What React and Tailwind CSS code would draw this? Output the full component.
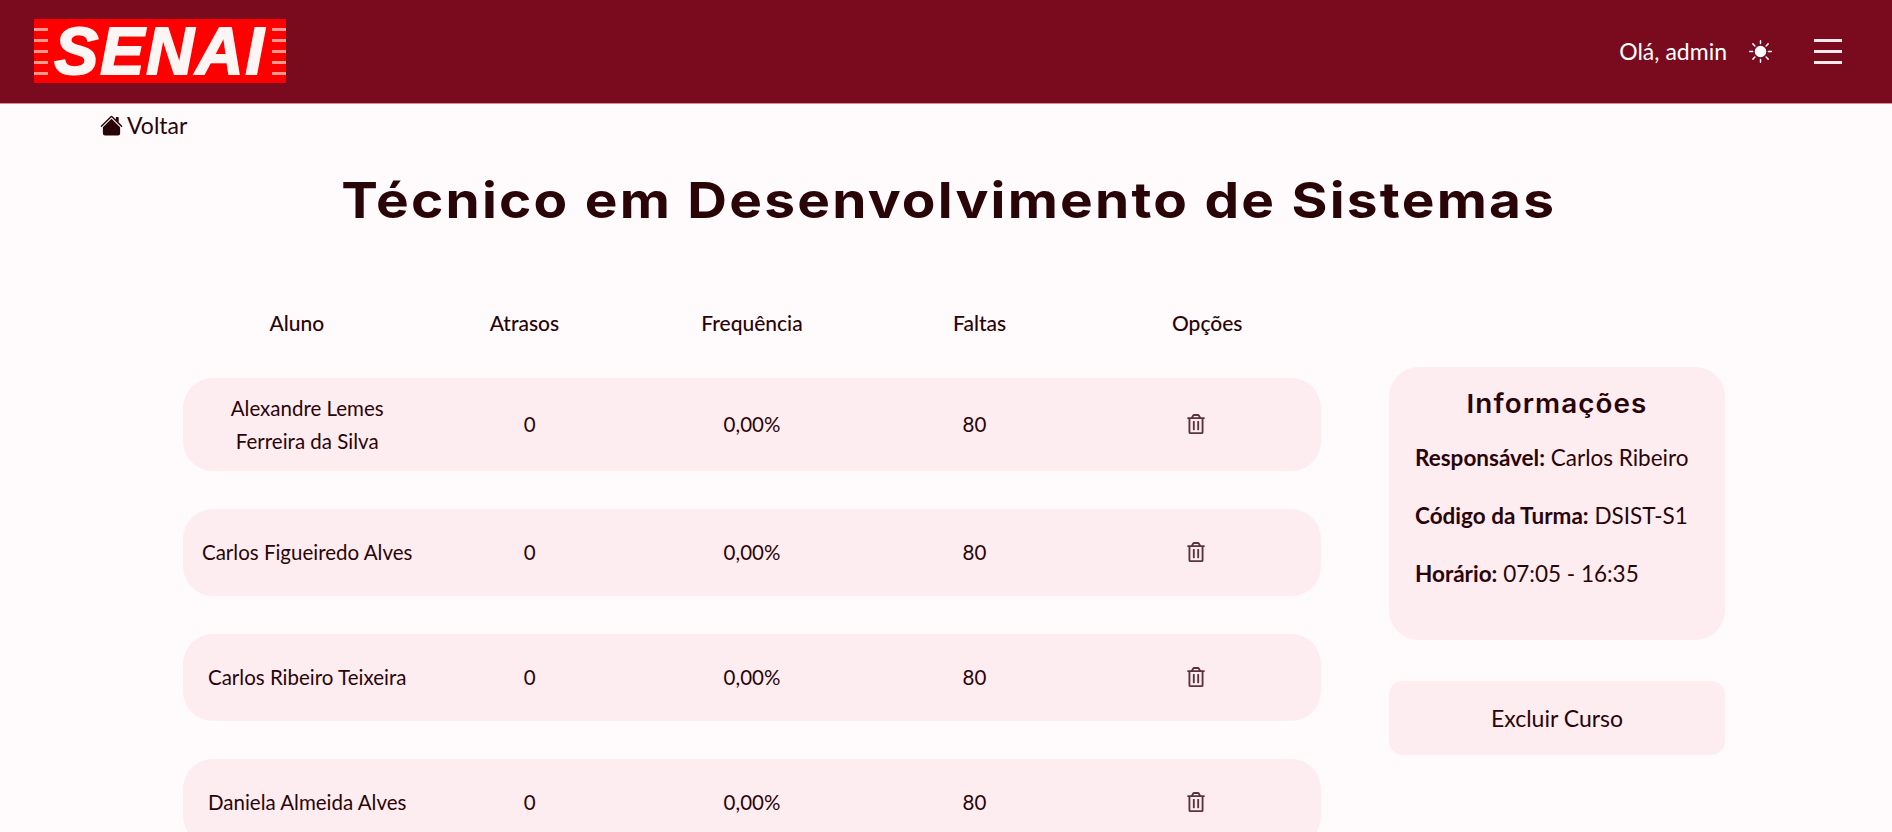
import React from 'react'
import { BsHouseFill, BsSunFill } from 'react-icons/bs'
import { FaRegTrashAlt } from 'react-icons/fa'

const alunos = [
  { nome: 'Alexandre Lemes Ferreira da Silva', altura: 'h-[93px]' },
  { nome: 'Carlos Figueiredo Alves', altura: 'h-[87px]' },
  { nome: 'Carlos Ribeiro Teixeira', altura: 'h-[87px]' },
  { nome: 'Daniela Almeida Alves', altura: 'h-[87px]' },
]

const colunas = ['Aluno', 'Atrasos', 'Frequência', 'Faltas', 'Opções']

function Stripes() {
  return (
    <div className="flex w-[14px] flex-col gap-[8px]">
      {[0, 1, 2, 3, 4].map((i) => (
        <div key={i} className="h-[3px] bg-[#ff9a8f]" />
      ))}
    </div>
  )
}

function Logo() {
  return (
    <div className="flex h-[64px] w-[252px] items-center justify-between bg-[#ff0000]">
      <Stripes />
      <span className="text-[66px] leading-none font-bold italic tracking-[2px] text-[#fbf6f4] [-webkit-text-stroke:2px_#fbf6f4] [font-family:'Liberation_Sans',sans-serif]">
        SENAI
      </span>
      <Stripes />
    </div>
  )
}

function Header() {
  return (
    <header className="flex h-[104px] items-center justify-between border-b border-[#d98a9c] bg-[#7a0b1e] pr-[50px] pb-[1px] pl-[34px]">
      <Logo />
      <div className="flex items-center text-white">
        <span className="text-[23px] leading-[28px]">Olá, admin</span>
        <BsSunFill size={23} className="mr-[42px] ml-[22px]" />
        <div className="flex w-[28px] flex-col gap-[8px]">
          <div className="h-[3px] bg-[#fde8ec]" />
          <div className="h-[3px] bg-[#fde8ec]" />
          <div className="h-[3px] bg-[#fde8ec]" />
        </div>
      </div>
    </header>
  )
}

function Linha({ aluno }) {
  return (
    <div className={`grid grid-cols-5 items-center rounded-[30px] bg-[#feedf0] px-[13px] text-center text-[20.5px] ${aluno.altura}`}>
      <span className="leading-[33px]">{aluno.nome}</span>
      <span>0</span>
      <span>0,00%</span>
      <span>80</span>
      <FaRegTrashAlt size={20} className="mx-auto -translate-x-px -translate-y-px text-[#5b343b]" />
    </div>
  )
}

export default function App() {
  return (
    <div className="h-screen overflow-hidden bg-[#fffafc] text-[#2a0508] [font-family:Lato,sans-serif]">
      <Header />
      <a className="mt-[8px] ml-[100px] flex items-center gap-[4px] text-[23px] leading-[26px]">
        <BsHouseFill size={23} />
        Voltar
      </a>
      <h1 className="mt-[32px] scale-x-[1.1] pl-[5px] text-center text-[50px] leading-[60px] font-bold tracking-[2px] [font-family:Inter,sans-serif]">
        Técnico em Desenvolvimento de Sistemas
      </h1>
      <div className="mt-[79px] ml-[183px] flex items-start gap-[68px]">
        <div className="w-[1138px]">
          <div className="grid grid-cols-5 text-center text-[21px] leading-[27px] font-medium">
            {colunas.map((c) => (
              <span key={c}>{c}</span>
            ))}
          </div>
          <div className="mt-[42px] flex flex-col gap-[38px]">
            {alunos.map((a) => (
              <Linha key={a.nome} aluno={a} />
            ))}
          </div>
        </div>
        <div className="mt-[58px] flex w-[336px] flex-col gap-[41px]">
          <div className="h-[273px] rounded-[30px] bg-[#feedf0] px-[26px] pt-[19px] text-[22.5px] leading-[30px]">
            <h2 className="mb-[21px] scale-x-[1.07] text-center text-[26px] leading-[36px] font-semibold tracking-[1px] [font-family:Inter,sans-serif]">Informações</h2>
            <p className="mb-[28px]"><b>Responsável:</b> Carlos Ribeiro</p>
            <p className="mb-[28px]"><b>Código da Turma:</b> DSIST-S1</p>
            <p><b>Horário:</b> 07:05 - 16:35</p>
          </div>
          <button className="h-[74px] rounded-[14px] bg-[#feedf0] text-center text-[23px]">Excluir Curso</button>
        </div>
      </div>
    </div>
  )
}
